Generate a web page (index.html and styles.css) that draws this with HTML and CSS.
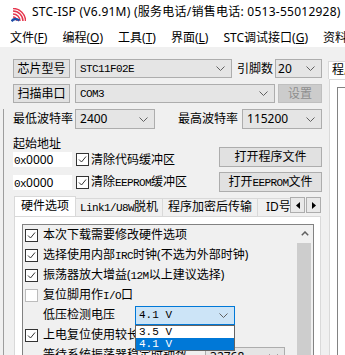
FILE: index.html
```html
<!DOCTYPE html>
<html lang="zh-CN">
<head>
  <meta charset="UTF-8" />
  <title>STC-ISP (V6.91M)</title>
  <link rel="stylesheet" href="styles.css">
</head>
<body>
  <div class="titlebar">
    <svg class="logo" width="15" height="14" viewBox="0 0 15 14">
      <g fill="none" stroke="#e6374e" stroke-width="1.5">
        <path d="M2 9 A4 4 0 0 1 6 13" />
        <path d="M2 6 A7 7 0 0 1 9 13" />
        <path d="M2 3 A10 10 0 0 1 12 13" />
        <path d="M2 0.5 A12.5 12.5 0 0 1 14.5 13" />
      </g>
      <path d="M0.5 13.2 C2.5 10.5 5.5 10.5 8.5 12.5" fill="none" stroke="#1f4fa8" stroke-width="2.4" />
    </svg>
    <span class="title">STC-ISP (V6.91M) (服务电话/销售电话: 0513-55012928)</span>
  </div>

  <div class="menubar">
    <span>文件(<u>F</u>)</span>
    <span>编程(<u>O</u>)</span>
    <span>工具(<u>T</u>)</span>
    <span>界面(<u>L</u>)</span>
    <span>STC调试接口(<u>G</u>)</span>
    <span>资料</span>
  </div>

  <div class="main">
    <div class="left">
      <div class="row">
        <button class="btn side">芯片型号</button>
        <div class="combo chip">
          <span class="mono">STC11F02E</span>
          <svg class="chev" width="9" height="5" viewBox="0 0 9 5"><path d="M0.5 0.5 L4.5 4.5 L8.5 0.5" /></svg>
        </div>
        <span class="lbl pins-lbl">引脚数</span>
        <div class="combo pins">
          <span>20</span>
          <svg class="chev" width="9" height="5" viewBox="0 0 9 5"><path d="M0.5 0.5 L4.5 4.5 L8.5 0.5" /></svg>
        </div>
      </div>

      <div class="row">
        <button class="btn side">扫描串口</button>
        <div class="combo port">
          <span class="mono">COM3</span>
          <svg class="chev" width="9" height="5" viewBox="0 0 9 5"><path d="M0.5 0.5 L4.5 4.5 L8.5 0.5" /></svg>
        </div>
        <button class="btn set" disabled>设置</button>
      </div>

      <div class="framed">
        <div class="row baud">
          <span class="lbl">最低波特率</span>
          <div class="combo baud-lo">
            <span>2400</span>
            <svg class="chev" width="9" height="5" viewBox="0 0 9 5"><path d="M0.5 0.5 L4.5 4.5 L8.5 0.5" /></svg>
          </div>
          <span class="lbl baud-hi-lbl">最高波特率</span>
          <div class="combo baud-hi">
            <span>115200</span>
            <svg class="chev" width="9" height="5" viewBox="0 0 9 5"><path d="M0.5 0.5 L4.5 4.5 L8.5 0.5" /></svg>
          </div>
        </div>

        <div class="addr">
          <div class="addr-fields">
            <div class="addr-title">起始地址</div>
            <div class="addr-row">
              <div class="edit"><span class="mono">0x</span>0000</div>
              <span class="check on"><svg width="11" height="11" viewBox="0 0 11 11"><path d="M2 5.5 L4.5 8 L9 2.5" /></svg></span>
              <span>清除代码缓冲区</span>
            </div>
            <div class="addr-row">
              <div class="edit"><span class="mono">0x</span>0000</div>
              <span class="check on"><svg width="11" height="11" viewBox="0 0 11 11"><path d="M2 5.5 L4.5 8 L9 2.5" /></svg></span>
              <span>清除<span class="mono">EEPROM</span>缓冲区</span>
            </div>
          </div>
          <div class="addr-btns">
            <button class="btn wide">打开程序文件</button>
            <button class="btn wide">打开<span class="mono">EEPROM</span>文件</button>
          </div>
        </div>

        <div class="tabs">
          <div class="tab-strip">
            <div class="tab-list">
              <span class="tab active">硬件选项</span>
              <span class="tab t2"><span class="mono">Link1/U8W</span>脱机</span>
              <span class="tab t3">程序加密后传输</span>
              <span class="tab t4">ID号</span>
            </div>
            <div class="spin">
              <span><svg width="4" height="7" viewBox="0 0 4 7"><path d="M4 0 L0 3.5 L4 7 Z" /></svg></span>
              <span><svg width="4" height="7" viewBox="0 0 4 7"><path d="M0 0 L4 3.5 L0 7 Z" /></svg></span>
            </div>
          </div>

          <div class="tab-panel">
            <div class="listbox">
              <div class="opts">
                <div class="opt">
                  <span class="check on"><svg width="11" height="11" viewBox="0 0 11 11"><path d="M2 5.5 L4.5 8 L9 2.5" /></svg></span>
                  <span>本次下载需要修改硬件选项</span>
                </div>
                <div class="opt">
                  <span class="check on"><svg width="11" height="11" viewBox="0 0 11 11"><path d="M2 5.5 L4.5 8 L9 2.5" /></svg></span>
                  <span>选择使用内部<span class="mono">IRC</span>时钟(不选为外部时钟)</span>
                </div>
                <div class="opt">
                  <span class="check on"><svg width="11" height="11" viewBox="0 0 11 11"><path d="M2 5.5 L4.5 8 L9 2.5" /></svg></span>
                  <span>振荡器放大增益(<span class="mono">12M</span>以上建议选择)</span>
                </div>
                <div class="opt">
                  <span class="check off"></span>
                  <span>复位脚用作<span class="mono">I/O</span>口</span>
                </div>
                <div class="opt sub">
                  <span class="sub-lbl">低压检测电压</span>
                  <div class="combo focus lvd">
                    <span class="mono volt">4.1 V</span>
                    <svg class="chev" width="9" height="5" viewBox="0 0 9 5"><path d="M0.5 0.5 L4.5 4.5 L8.5 0.5" /></svg>
                    <div class="dropdown">
                      <div class="item mono volt">3.5 V</div>
                      <div class="item mono volt selected">4.1 V</div>
                    </div>
                  </div>
                </div>
                <div class="opt">
                  <span class="check on"><svg width="11" height="11" viewBox="0 0 11 11"><path d="M2 5.5 L4.5 8 L9 2.5" /></svg></span>
                  <span>上电复位使用较长的复位延时</span>
                </div>
                <div class="opt sub">
                  <span class="sub-lbl">等待系统振荡器稳定时钟数</span>
                  <div class="combo wait">
                    <span>32768</span>
                    <svg class="chev" width="9" height="5" viewBox="0 0 9 5"><path d="M0.5 0.5 L4.5 4.5 L8.5 0.5" /></svg>
                  </div>
                </div>
              </div>
              <div class="vscroll">
                <span class="up"><svg width="8" height="5" viewBox="0 0 8 5"><path d="M0.8 4.2 L4 1 L7.2 4.2" /></svg></span>
                <span class="thumb"></span>
              </div>
            </div>
          </div>
        </div>
      </div>
    </div>

    <div class="right">
      <div class="rtab">程序文件</div>
      <div class="rpanel">
        <div class="rbox"></div>
      </div>
    </div>
  </div>
</body>
</html>
```

FILE: styles.css
```css
* {
  box-sizing: border-box;
}
body {
  margin: 0;
  width: 345px;
  height: 355px;
  overflow: hidden;
  background: #f0f0f0;
  font-family: "Noto Sans", "Noto Sans CJK SC", sans-serif;
  font-size: 12px;
  line-height: 16px;
  color: #000;
}
.mono {
  font-family: "Liberation Mono", "Noto Sans CJK SC", monospace;
  font-size: 11px;
  letter-spacing: -0.6px;
}
svg {
  display: block;
}

/* Title and menu */
.titlebar {
  height: 30px;
  background: #fff;
  display: flex;
  align-items: flex-start;
  padding: 4px 0 0 11px;
  white-space: nowrap;
}
.logo {
  margin-top: 4px;
  margin-right: 6px;
  flex: none;
}
.title {
  letter-spacing: 0.25px;
}
.menubar {
  height: 17px;
  background: #fff;
  display: flex;
  gap: 15px;
  padding-left: 10px;
  white-space: nowrap;
}

/* Main area */
.main {
  display: flex;
  padding-top: 12px;
}
.left {
  width: 325px;
  flex: none;
}
.row {
  display: flex;
  align-items: center;
  height: 19px;
  margin-left: 13px;
  margin-bottom: 6px;
}
.btn {
  height: 19px;
  padding: 0;
  border: 1px solid #adadad;
  background: #e1e1e1;
  font: inherit;
  color: #000;
  line-height: 16px;
}
.btn.side {
  width: 57px;
}
.btn.set {
  width: 44px;
  margin-left: 3px;
  background: #cccccc;
  border-color: #bfbfbf;
  color: #8e8e8e;
}
.lbl {
  white-space: nowrap;
}
.combo {
  position: relative;
  height: 19px;
  display: flex;
  align-items: center;
  justify-content: space-between;
  padding: 0 6px 0 4px;
  border: 1px solid #adadad;
  background: #e5e5e5;
  white-space: nowrap;
}
.chev path {
  fill: none;
  stroke: #606060;
  stroke-width: 1;
}
.combo.chip {
  width: 157px;
  margin-left: 5px;
}
.pins-lbl {
  margin-left: 5px;
}
.combo.pins {
  width: 47px;
  margin-left: 2px;
  padding-left: 2px;
}
.combo.port {
  width: 200px;
  margin-left: 5px;
}

/* Framed lower section */
.framed {
  margin-left: 3px;
  border-left: 1px solid #9d9d9d;
  padding-left: 9px;
}
.row.baud {
  height: 20px;
  margin-left: 0;
  margin-bottom: 0;
}
.row.baud .combo {
  height: 20px;
  width: 80px;
}
.combo.baud-lo {
  margin-left: 2px;
}
.baud-hi-lbl {
  margin-left: 23px;
}
.combo.baud-hi {
  margin-left: 4px;
}

.addr {
  display: flex;
  justify-content: space-between;
  width: 309px;
  margin-top: 7px;
}
.addr-title {
  height: 16px;
}
.addr-row {
  display: flex;
  align-items: center;
  height: 15px;
  margin-bottom: 8px;
  white-space: nowrap;
}
.addr-row:last-child {
  margin-bottom: 0;
}
.edit {
  width: 59px;
  height: 15px;
  background: #fff;
  padding-left: 1px;
  line-height: 15px;
  margin-right: 4px;
}
.check {
  width: 13px;
  height: 13px;
  flex: none;
  border: 1px solid #333;
  background: #fff;
  margin-right: 2px;
}
.check path {
  fill: none;
  stroke: #333;
  stroke-width: 1;
}
.check.off {
  border-color: #bcbcbc;
}
.addr-btns {
  display: flex;
  flex-direction: column;
  gap: 5px;
  padding-top: 11px;
}
.btn.wide {
  width: 103px;
  height: 20px;
}

/* Tabs */
.tabs {
  margin: 4px 0 0 1px;
  width: 307px;
}
.tab-strip {
  display: flex;
  height: 20px;
}
.tab-list {
  flex: 1;
  display: flex;
  align-items: flex-end;
  overflow: hidden;
  white-space: nowrap;
}
.tab {
  flex: none;
  height: 18px;
  line-height: 16px;
  border: 1px solid #d9d9d9;
  border-bottom: none;
  border-left: none;
  background: #f0f0f0;
  text-align: center;
}
.tab.active {
  position: relative;
  z-index: 1;
  width: 62px;
  height: 21px;
  margin-bottom: -1px;
  padding-top: 1px;
  border-left: 1px solid #d9d9d9;
  background: #fff;
}
.tab.t2 {
  width: 87px;
}
.tab.t3 {
  width: 95px;
}
.tab.t4 {
  width: 40px;
  text-align: left;
  padding-left: 8px;
}
.spin {
  display: flex;
  gap: 1px;
  margin-top: 1px;
  height: 16px;
}
.spin span {
  width: 15px;
  height: 16px;
  border: 1px solid #adadad;
  background: #e9e9e9;
  display: flex;
  align-items: center;
  justify-content: center;
}
.spin path {
  fill: #000;
}
.tab-panel {
  border: 1px solid #d9d9d9;
  background: #fff;
  padding: 7px 6px 0 7px;
  height: 160px;
}
.listbox {
  display: flex;
  height: 150px;
  border: 1px solid #828282;
  background: #f0f0f0;
}
.opts {
  flex: 1;
}
.opt {
  display: flex;
  align-items: center;
  height: 20px;
  padding-left: 2px;
  white-space: nowrap;
}
.opt .check {
  margin-right: 5px;
}
.opt.sub {
  padding-left: 20px;
}
.combo.focus {
  background: #cce4f7;
  border-color: #0078d7;
}
.combo.lvd {
  width: 100px;
  margin-left: 20px;
  padding-left: 3px;
}
.volt {
  letter-spacing: 0;
}
.dropdown {
  position: absolute;
  z-index: 2;
  top: 18px;
  left: -1px;
  width: 100px;
  border: 1px solid #646464;
  background: #fff;
}
.dropdown .item {
  height: 12px;
  line-height: 12px;
  padding-left: 3px;
}
.dropdown .item.selected {
  background: #0078d7;
  color: #fff;
}
.combo.wait {
  width: 80px;
  margin-left: 18px;
  align-self: flex-start;
  margin-top: 2px;
}
.vscroll {
  width: 17px;
  flex: none;
  display: flex;
  flex-direction: column;
}
.vscroll .up {
  height: 17px;
  display: flex;
  align-items: center;
  justify-content: center;
}
.vscroll .up path {
  fill: none;
  stroke: #606060;
  stroke-width: 1.5;
}
.vscroll .thumb {
  flex: 1;
  margin: 1px 2px 0 1px;
  background: #cdcdcd;
}

/* Right side panel */
.right {
  flex: 1;
  overflow: hidden;
  padding-top: 2px;
  padding-left: 3px;
}
.rtab {
  width: 60px;
  height: 18px;
  padding-left: 3px;
  line-height: 16px;
  white-space: nowrap;
  border: 1px solid #d9d9d9;
  border-bottom: none;
  background: #fff;
}
.rpanel {
  margin-left: 1px;
  height: 300px;
  border-left: 1px solid #d9d9d9;
  border-top: 1px solid #d9d9d9;
  background: #fff;
  padding: 7px 0 0 7px;
}
.rbox {
  height: 280px;
  border: 1px solid #828282;
  border-right: none;
  background: #fff;
}
```
